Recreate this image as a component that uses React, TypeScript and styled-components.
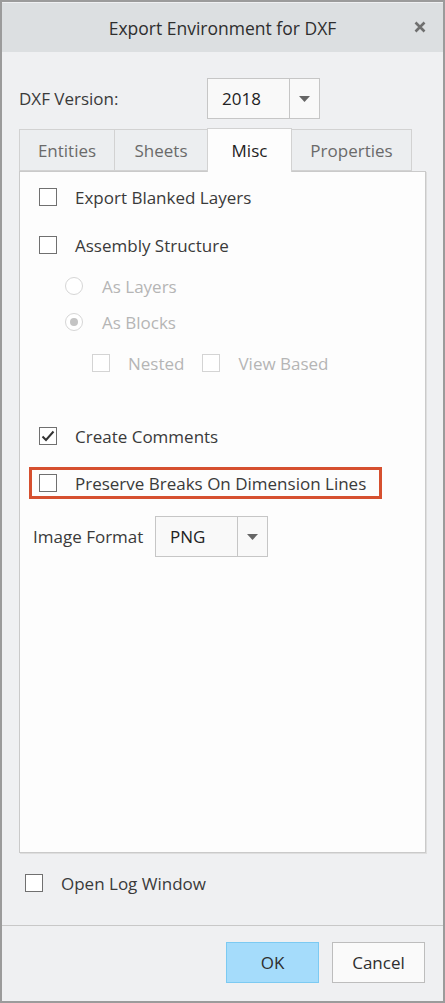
import styled, { createGlobalStyle } from 'styled-components';

const GlobalStyle = createGlobalStyle`
  html, body {
    margin: 0;
    padding: 0;
    background: #ffffff;
  }
  * {
    box-sizing: border-box;
  }
`;

const Window = styled.div`
  width: 445px;
  height: 1003px;
  border: 2px solid #9b9b9b;
  background: #eff0f2;
  display: flex;
  flex-direction: column;
  font-family: 'Open Sans', 'Noto Sans', sans-serif;
  color: #3a3a3a;
`;

const TitleBar = styled.div`
  height: 49px;
  margin-top: 1px;
  background: #dcdfe1;
  display: flex;
  align-items: center;
  justify-content: center;
  position: relative;
  font-size: 17.5px;
  color: #2e2e2e;
`;

const CloseButton = styled.div`
  position: absolute;
  right: 13px;
  top: 14px;
  width: 20px;
  height: 20px;
  display: flex;
  align-items: center;
  justify-content: center;
`;

const Body = styled.div`
  flex: 1;
  display: flex;
  flex-direction: column;
  padding: 0 17px;
`;

const VersionRow = styled.div`
  display: flex;
  align-items: center;
  margin-top: 26px;
  height: 41px;
`;

const Label = styled.span<{ $width: number }>`
  width: ${(p) => p.$width}px;
  font-size: 17px;
  color: #3a3a3a;
`;

const Combo = styled.div<{ $width: number }>`
  width: ${(p) => p.$width}px;
  height: 41px;
  display: flex;
  border: 1px solid #c6c6c6;
  background: #f9f9f9;
`;

const ComboValue = styled.div`
  flex: 1;
  display: flex;
  align-items: center;
  padding-left: 14px;
  font-size: 17px;
  color: #222;
  border-right: 1px solid #c6c6c6;
`;

const ComboArrow = styled.div`
  width: 29px;
  display: flex;
  align-items: center;
  justify-content: center;
`;

const Tabs = styled.div`
  display: flex;
  margin-top: 10px;
  height: 42px;
  position: relative;
  z-index: 1;
`;

const Tab = styled.div<{ $width: number; $active?: boolean }>`
  width: ${(p) => p.$width}px;
  height: ${(p) => (p.$active ? 44 : 42)}px;
  margin-top: ${(p) => (p.$active ? -1 : 0)}px;
  display: flex;
  align-items: center;
  justify-content: center;
  font-size: 17px;
  color: ${(p) => (p.$active ? '#222' : '#6a6a6a')};
  background: ${(p) => (p.$active ? '#fdfdfd' : '#eceef0')};
  border: 1px solid #d2d2d2;
  border-bottom: ${(p) => (p.$active ? 'none' : '1px solid #d2d2d2')};
  margin-right: -1px;
`;

const Panel = styled.div`
  height: 682px;
  width: 407px;
  background: #fdfdfd;
  border: 1px solid #cacaca;
  box-shadow: 1px 1px 0 #dedede;
  display: flex;
  flex-direction: column;
  padding-left: 19px;
`;

const OptionRow = styled.div<{ $mt: number; $indent?: number; $disabled?: boolean }>`
  display: flex;
  align-items: center;
  height: 24px;
  margin-top: ${(p) => p.$mt}px;
  margin-left: ${(p) => p.$indent ?? 0}px;
  font-size: 17px;
  white-space: nowrap;
  color: ${(p) => (p.$disabled ? '#b5b5b5' : '#3a3a3a')};
`;

const Box = styled.span<{ $disabled?: boolean }>`
  width: 18px;
  height: 18px;
  flex: none;
  border: 1px solid ${(p) => (p.$disabled ? '#d4d4d4' : '#707070')};
  background: #ffffff;
  display: flex;
  align-items: center;
  justify-content: center;
  margin-right: 18px;
`;

const Radio = styled.span<{ $checked?: boolean }>`
  width: 18px;
  height: 18px;
  flex: none;
  border-radius: 50%;
  border: 1px solid #d6d6d6;
  background: #ffffff;
  display: flex;
  align-items: center;
  justify-content: center;
  margin-right: 19px;

  &::after {
    content: '';
    display: ${(p) => (p.$checked ? 'block' : 'none')};
    width: 8px;
    height: 8px;
    border-radius: 50%;
    background: #c4c4c4;
  }
`;

const Pair = styled.span`
  display: flex;
  align-items: center;
  margin-right: 18px;
`;

const Highlight = styled.div`
  width: 353px;
  height: 32px;
  margin-top: 19px;
  margin-left: -10px;
  border: 3px solid #d6502f;
  display: flex;
  align-items: center;
  padding-left: 7px;
  font-size: 17px;
  white-space: nowrap;
  color: #3a3a3a;
`;

const FormatRow = styled.div`
  display: flex;
  align-items: center;
  margin-top: 17px;
  margin-left: -6px;
`;

const LogRow = styled.div`
  display: flex;
  align-items: center;
  height: 24px;
  margin-top: 18px;
  padding-left: 6px;
  font-size: 17px;
`;

const Footer = styled.div`
  height: 76px;
  border-top: 1px solid #c8c8c8;
  display: flex;
  justify-content: flex-end;
  align-items: flex-start;
  padding: 16px 18px 0 0;
  gap: 13px;
  margin-top: 23px;
`;

const Button = styled.button<{ $primary?: boolean }>`
  width: 93px;
  height: 41px;
  font-family: inherit;
  font-size: 17px;
  color: #2e2e2e;
  background: ${(p) => (p.$primary ? '#a5dcfb' : '#fafafa')};
  border: 1px solid ${(p) => (p.$primary ? '#7ccaf2' : '#bdbdbd')};
  padding: 0;
`;

const Caret = () => (
  <svg width="11" height="6" viewBox="0 0 11 6">
    <path d="M0 0 L11 0 L5.5 6 Z" fill="#666" />
  </svg>
);

const Check = () => (
  <svg width="14" height="12" viewBox="0 0 14 12">
    <path d="M1.5 6.5 L5 10 L12.5 1.5" stroke="#333" strokeWidth="2" fill="none" />
  </svg>
);

export default function App() {
  return (
    <Window>
      <GlobalStyle />
      <TitleBar>
        Export Environment for DXF
        <CloseButton>
          <svg width="12" height="12" viewBox="0 0 12 12">
            <path d="M1.5 1.5 L10.5 10.5 M10.5 1.5 L1.5 10.5" stroke="#6f6f6f" strokeWidth="2.6" />
          </svg>
        </CloseButton>
      </TitleBar>
      <Body>
        <VersionRow>
          <Label $width={188}>DXF Version:</Label>
          <Combo $width={113}>
            <ComboValue>2018</ComboValue>
            <ComboArrow>
              <Caret />
            </ComboArrow>
          </Combo>
        </VersionRow>
        <Tabs>
          <Tab $width={96}>Entities</Tab>
          <Tab $width={94}>Sheets</Tab>
          <Tab $width={85} $active>
            Misc
          </Tab>
          <Tab $width={121}>Properties</Tab>
        </Tabs>
        <Panel>
          <OptionRow $mt={13}>
            <Box />
            Export Blanked Layers
          </OptionRow>
          <OptionRow $mt={24}>
            <Box />
            Assembly Structure
          </OptionRow>
          <OptionRow $mt={17} $indent={26} $disabled>
            <Radio />
            As Layers
          </OptionRow>
          <OptionRow $mt={12} $indent={26} $disabled>
            <Radio $checked />
            As Blocks
          </OptionRow>
          <OptionRow $mt={17} $indent={53} $disabled>
            <Pair>
              <Box $disabled />
              Nested
            </Pair>
            <Pair>
              <Box $disabled />
              View Based
            </Pair>
          </OptionRow>
          <OptionRow $mt={49}>
            <Box>
              <Check />
            </Box>
            Create Comments
          </OptionRow>
          <Highlight>
            <Box />
            Preserve Breaks On Dimension Lines
          </Highlight>
          <FormatRow>
            <Label $width={122}>Image Format</Label>
            <Combo $width={113}>
              <ComboValue>PNG</ComboValue>
              <ComboArrow>
                <Caret />
              </ComboArrow>
            </Combo>
          </FormatRow>
        </Panel>
        <LogRow>
          <Box />
          Open Log Window
        </LogRow>
      </Body>
      <Footer>
        <Button $primary>OK</Button>
        <Button>Cancel</Button>
      </Footer>
    </Window>
  );
}
